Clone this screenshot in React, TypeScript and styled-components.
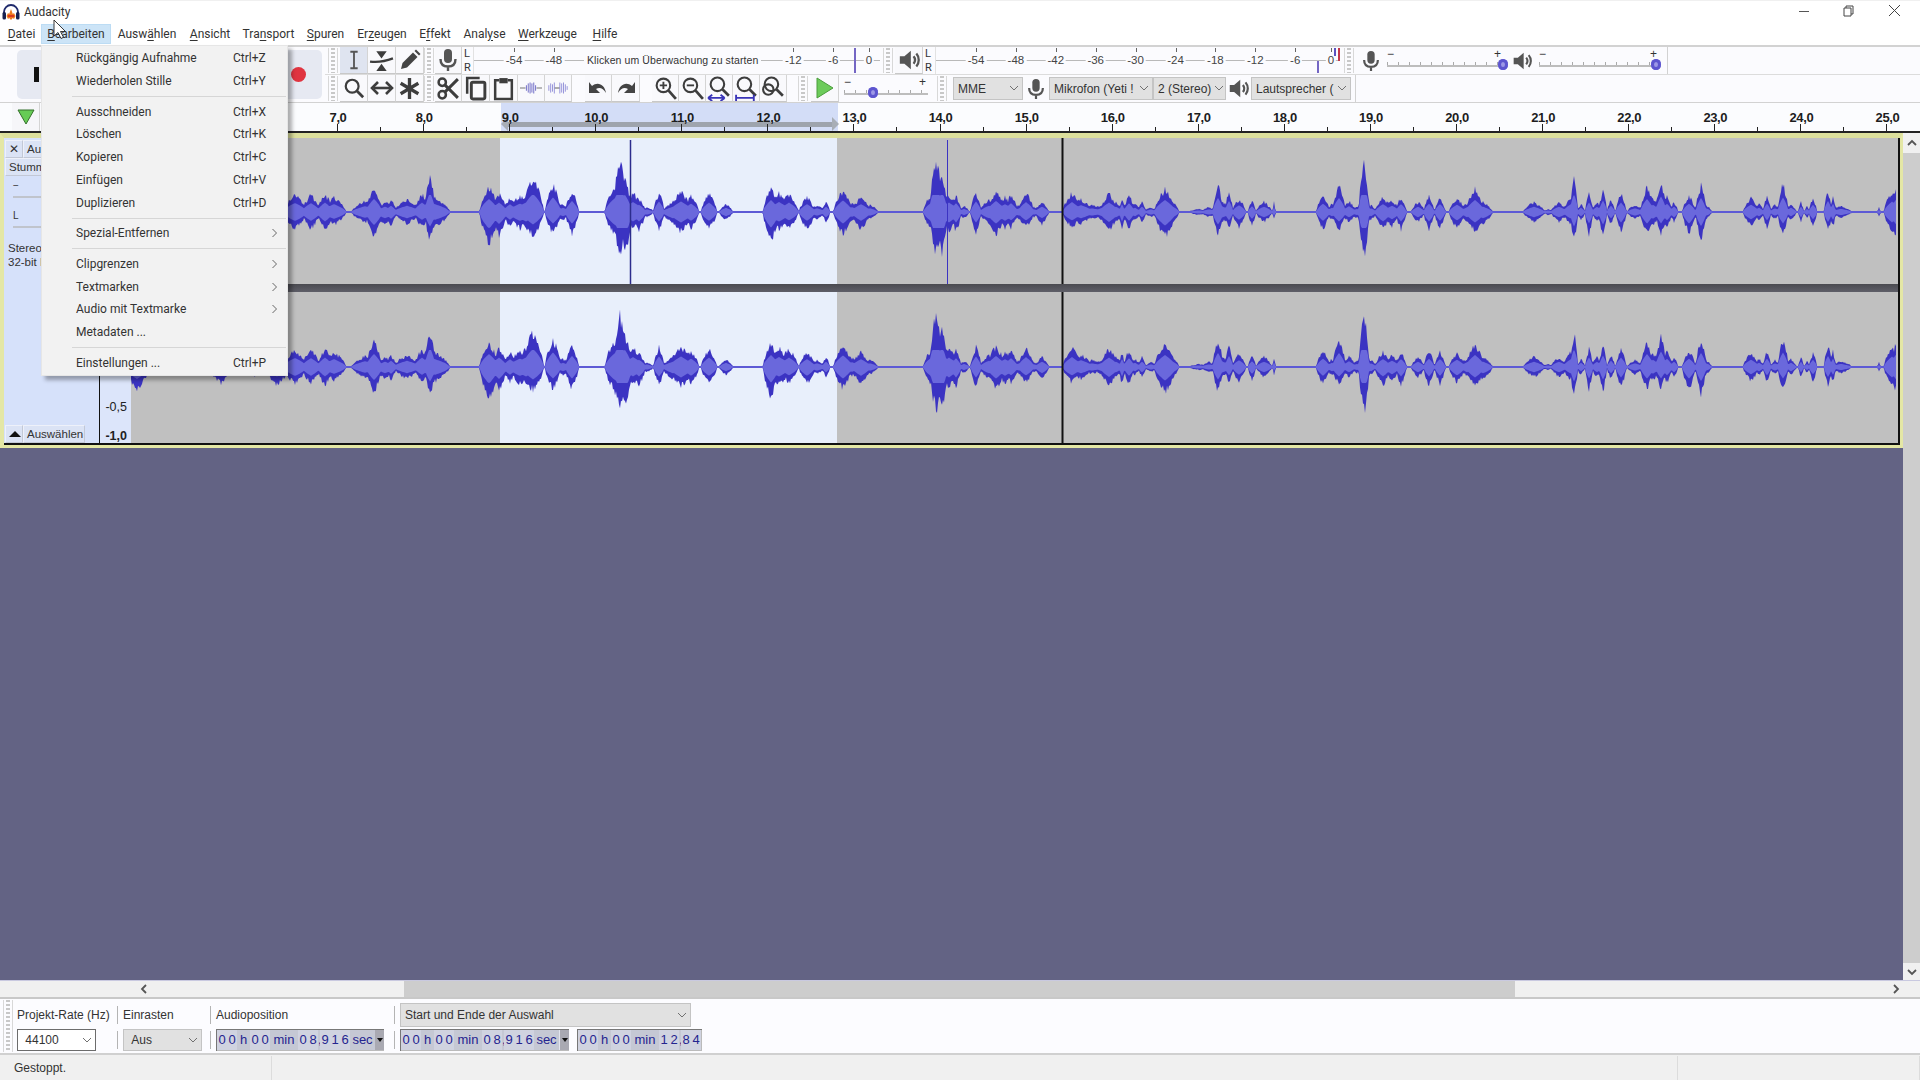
import React from 'react'
import styled, { createGlobalStyle } from 'styled-components'

const GlobalStyle = createGlobalStyle`
	html, body {
		margin: 0;
		padding: 0;
		background: #636384;
	}
	* {
		box-sizing: border-box;
	}
`

const sans = `"Liberation Sans", Arial, sans-serif`
const ui = `Roboto, "Liberation Sans", sans-serif`

/* ---------- waveform data ---------- */

// x, peak up, peak down, half width (page px)
const bursts: number[][] = [
	[138, 12, 23, 9], [160, 8, 8, 10], [222, 10, 16, 9], [255, 8, 9, 9], [278, 12, 18, 9],
	[296, 17, 17, 9], [312, 17, 17, 7], [326, 18, 18, 6], [335, 15, 13, 9],
	[366, 11, 11, 10], [375, 25, 25, 6], [386, 10, 12, 7], [392, 12, 13, 4], [408, 12, 12, 10],
	[423, 18, 15, 6], [431, 37, 28, 4], [436, 15, 15, 11],
	[490, 25, 32, 7], [500, 18, 23, 6], [511, 15, 15, 5], [521, 16, 17, 9], [534, 35, 24, 8], [527, 18, 18, 9],
	[554, 28, 22, 6], [564, 8, 8, 6], [573, 21, 22, 5],
	[618, 30, 28, 9], [621, 55, 44, 5], [626, 33, 43, 5], [634, 19, 18, 8], [640, 14, 18, 5], [648, 5, 5, 5],
	[660, 20, 18, 4], [674, 10, 12, 8], [682, 20, 20, 9], [692, 16, 17, 6], [710, 18, 17, 6], [727, 8, 8, 5],
	[772, 23, 30, 6], [780, 19, 18, 9], [790, 18, 16, 7], [808, 15, 17, 6], [818, 7, 7, 6], [827, 10, 10, 3],
	[844, 22, 22, 7], [853, 9, 9, 7], [862, 15, 17, 7], [871, 7, 7, 6],
	[931, 16, 16, 5], [937, 55, 45, 5], [943, 40, 43, 4], [950, 18, 20, 7], [957, 17, 20, 4], [965, 6, 6, 4],
	[977, 20, 20, 4], [990, 12, 12, 7], [997, 21, 22, 7], [1006, 15, 17, 7], [1012, 17, 16, 5], [1020, 7, 7, 5],
	[1027, 19, 16, 6], [1035, 5, 5, 5], [1043, 10, 12, 5],
	[1073, 19, 16, 7], [1082, 13, 12, 9], [1093, 7, 7, 10], [1103, 8, 8, 6], [1110, 18, 19, 7], [1117, 10, 10, 5],
	[1123, 15, 18, 2], [1130, 17, 17, 4], [1136, 8, 8, 4], [1143, 10, 10, 3], [1152, 5, 5, 5],
	[1166, 23, 26, 8], [1172, 12, 12, 6], [1200, 3, 3, 8], [1210, 5, 5, 6],
	[1219, 27, 24, 4], [1224, 10, 10, 6], [1230, 21, 16, 3], [1240, 13, 15, 5], [1253, 11, 13, 3], [1265, 10, 10, 6], [1275, 10, 8, 1],
	[1324, 16, 17, 5], [1333, 8, 8, 5], [1340, 27, 18, 5], [1350, 11, 10, 5], [1358, 6, 6, 5], [1365, 52, 46, 4],
	[1372, 7, 8, 4], [1384, 15, 18, 6], [1393, 12, 14, 6], [1402, 15, 18, 4], [1419, 10, 10, 5], [1430, 16, 18, 4],
	[1441, 15, 17, 4], [1458, 14, 16, 6], [1468, 9, 10, 5], [1476, 23, 20, 7], [1484, 10, 12, 7],
	[1535, 10, 10, 8], [1549, 3, 3, 4], [1560, 10, 10, 6], [1571, 14, 12, 5], [1575, 35, 28, 3], [1582, 8, 8, 3],
	[1590, 18, 22, 3], [1598, 10, 10, 4], [1604, 22, 24, 3], [1612, 12, 12, 3], [1622, 18, 20, 4], [1636, 7, 7, 6],
	[1648, 25, 22, 5], [1654, 14, 13, 5], [1662, 30, 22, 4], [1668, 16, 16, 4], [1675, 10, 10, 3], [1690, 16, 22, 5], [1702, 27, 27, 4], [1706, 8, 8, 5],
	[1752, 14, 14, 6], [1760, 8, 8, 4], [1768, 16, 16, 3], [1776, 7, 7, 4], [1784, 28, 22, 4], [1792, 8, 8, 4],
	[1802, 10, 10, 2], [1808, 6, 6, 2], [1814, 14, 14, 3], [1829, 21, 19, 3], [1834, 16, 15, 2], [1842, 6, 6, 8],
	[1880, 5, 5, 1], [1893, 20, 20, 6], [1899, 28, 28, 6],
]

const WAVE_LEFT = 132
const WAVE_WIDTH = 1765

function buildWave(seed: number, center: number) {
	let state = seed
	const rand = () => {
		state = (state * 16807) % 2147483647
		return state / 2147483647
	}
	const ups: number[] = []
	const downs: number[] = []
	const coreUps: number[] = []
	const coreDowns: number[] = []
	for (let px = 0; px <= WAVE_WIDTH; px += 1) {
		const x = WAVE_LEFT + px
		let up = 0
		let down = 0
		for (const [bx, bu, bd, bw] of bursts) {
			const d = Math.abs(x - bx)
			const reach = bw * 1.35
			if (d >= reach) continue
			const shape = Math.pow(1 - d / reach, 0.62)
			up = Math.max(up, bu * shape)
			down = Math.max(down, bd * shape)
		}
		ups.push(Math.max(up * (0.78 + 0.36 * rand()), 1))
		downs.push(Math.max(down * (0.78 + 0.36 * rand()), 1))
		coreUps.push(Math.max(Math.min(up * 0.52, 17), 0.8))
		coreDowns.push(Math.max(Math.min(down * 0.52, 16), 0.8))
	}
	const outline = (top: number[], bottom: number[]) => {
		const upper = top.map((v, i) => `${i},${(center - v).toFixed(1)}`)
		const lower = bottom.map((v, i) => `${i},${(center + v).toFixed(1)}`).reverse()
		return `M${upper.join('L')}L${lower.join('L')}Z`
	}
	return { peak: outline(ups, downs), core: outline(coreUps, coreDowns) }
}

const waveTop = buildWave(4711, 74)
const waveBottom = buildWave(90210, 75)

/* ---------- icons ---------- */

const ink = '#3d3d3d'

const Glyph = ({ size = 22, children }: { size?: number; children: React.ReactNode }) => (
	<svg width={size} height={size} viewBox="0 0 24 24" fill="none" stroke={ink} strokeWidth="2.4">
		{children}
	</svg>
)

const IBeamIcon = () => (
	<Glyph>
		<path d="M8 3h8M12 3v18M8 21h8" stroke="#555" strokeWidth="2" />
	</Glyph>
)
const EnvelopeIcon = () => (
	<Glyph size={25}>
		<path d="M7 3h10l-5 7zM7 22h10l-5-7z" fill={ink} stroke="none" />
		<path d="M1 13c7 1 14 0 22-3" strokeWidth="2.2" />
	</Glyph>
)
const PencilIcon = () => (
	<Glyph size={24}>
		<path d="M3 21l1.5-6L15 4.500 19.500 9 9 19.500z" fill="#444" stroke="none" />
		<path d="M16.500 3L18 1.500 22.500 6 21 7.500z" fill="#444" stroke="none" />
	</Glyph>
)
const MicIcon = ({ size = 24 }: { size?: number }) => (
	<Glyph size={size}>
		<rect x="8" y="1" width="8" height="14" rx="4" fill="#555" stroke="none" />
		<path d="M4.500 11c0 5 3 7.500 7.500 7.500s7.500-2.500 7.500-7.500M12 18.500V23" stroke="#555" />
	</Glyph>
)
const SearchIcon = () => (
	<Glyph>
		<circle cx="10" cy="10" r="7" />
		<path d="M15 15l7 7" strokeWidth="3" />
	</Glyph>
)
const FitIcon = () => (
	<Glyph size={24}>
		<path d="M4 12h16" strokeWidth="2.6" />
		<path d="M8 6l-6 6 6 6M16 6l6 6-6 6" strokeWidth="2.6" />
	</Glyph>
)
const MultiIcon = () => (
	<Glyph size={25}>
		<path d="M12 2v20M3.500 7l17 10M20.500 7l-17 10" strokeWidth="3.2" />
	</Glyph>
)
const CutIcon = () => (
	<Glyph size={25}>
		<circle cx="6" cy="6" r="3.500" />
		<circle cx="6" cy="18" r="3.500" />
		<path d="M8.500 8.500L21 21M8.500 15.500L21 3" strokeWidth="2.800" />
	</Glyph>
)
const CopyIcon = () => (
	<Glyph size={25}>
		<path d="M4 17V2h12" strokeWidth="2.400" />
		<rect x="8" y="6" width="13" height="16" rx="1.500" strokeWidth="2.800" />
	</Glyph>
)
const PasteIcon = () => (
	<Glyph size={25}>
		<path d="M8 4H4v18h16V4h-4" strokeWidth="2.400" />
		<rect x="8" y="2" width="8" height="5" fill={ink} stroke="none" />
	</Glyph>
)
const TrimIcon = () => (
	<Glyph>
		<path d="M0 12h6M18 12h6" stroke="#777" strokeWidth="1.300" />
		<path d="M7 9v6M9 7v10M11 6v12M13 7v10M15 6v12M17 9v6" stroke="#6a67c4" strokeWidth="1" />
	</Glyph>
)
const SilenceIcon = () => (
	<Glyph>
		<path d="M8 12h6" stroke="#777" strokeWidth="1.300" />
		<path d="M2 9v6M4 7v10M6 8v8M8 6v12M14 6v12M16 7v10M18 6v12M20 8v8M22 10v4" stroke="#8f8cd8" strokeWidth="1" />
	</Glyph>
)
const UndoIcon = () => (
	<Glyph size={24}>
		<path d="M3 6v11h11l-4-4c3.500-2 7-1 10 4 -1-8-8-12-14-7z" fill="#444" stroke="none" />
	</Glyph>
)
const RedoIcon = () => (
	<Glyph size={24}>
		<path d="M21 6v11H10l4-4c-3.500-2-7-1-10 4 1-8 8-12 14-7z" fill="#444" stroke="none" />
	</Glyph>
)
const ZoomIcon = ({ mark }: { mark: 'in' | 'out' | 'sel' | 'fit' | 'toggle' }) => (
	<Glyph size={25}>
		<circle cx="10" cy={mark === 'in' || mark === 'out' ? 9 : 8} r="6.500" strokeWidth="2" />
		<path d={mark === 'in' || mark === 'out' ? 'M15 14l7 8' : 'M15 13l6 6'} strokeWidth="2.600" />
		{mark === 'in' && <path d="M6.500 9h7M10 5.500v7" strokeWidth="1.800" />}
		{mark === 'out' && <path d="M6.500 9h7" strokeWidth="1.800" />}
		{mark === 'sel' && <path d="M1 21h16M1 21l4-3M1 21l4 3M17 21l-4-3M17 21l-4 3" stroke="#3a35b8" strokeWidth="1.800" />}
		{mark === 'fit' && <path d="M2 18v6M19 18v6M2 21h17" stroke="#3a35b8" strokeWidth="1.800" />}
		{mark === 'toggle' && <circle cx="7" cy="13" r="5" strokeWidth="2" />}
	</Glyph>
)
const PlayIcon = () => (
	<svg width="18" height="22" viewBox="0 0 18 22">
		<path d="M1 1l16 10L1 21z" fill="#6ccb5a" stroke="#4a9d3c" />
	</svg>
)
const SpeakerIcon = ({ size = 22, fill = '#555' }: { size?: number; fill?: string }) => (
	<svg width={size} height={size} viewBox="0 0 24 24" fill="none" stroke={fill} strokeWidth="2.500">
		<path d="M2 8h5l7-6v20l-7-6H2z" fill={fill} stroke="none" />
		<path d="M17 8c2 2.500 2 5.500 0 8M20 5c3.500 4 3.500 10 0 14" />
	</svg>
)
const Chevron = () => (
	<svg width="10" height="7" viewBox="0 0 10 7" fill="none" stroke="#707070" strokeWidth="1">
		<path d="M1 1l4 4 4-4" />
	</svg>
)
const Logo = () => (
	<svg width="18" height="17" viewBox="0 0 18 17" fill="none">
		<path d="M2 11V8a7 7 0 0 1 14 0v3" stroke="#1f2a6b" strokeWidth="1.800" />
		<rect x="0.500" y="8" width="3.500" height="7.500" rx="1.500" fill="#16204f" />
		<rect x="14" y="8" width="3.500" height="7.500" rx="1.500" fill="#16204f" />
		<path d="M4.500 12l1.500-3 1.200 1 1.800-5 1.800 5 1.200-1 1.500 3-1.500 3-1.200-1-1.800 2-1.800-2-1.200 1z" fill="#ef7a1d" />
		<path d="M6 12h6" stroke="#d83a24" strokeWidth="2" />
	</svg>
)

/* ---------- window shell ---------- */

const Window = styled.div`
	position: relative;
	width: 1920px;
	height: 1080px;
	display: flex;
	flex-direction: column;
	overflow: hidden;
	background: #fff;
	font-family: ${sans};
	color: #222;
`

const TitleBar = styled.div`
	height: 22px;
	display: flex;
	align-items: center;
	padding: 1px 0 0 2px;
	gap: 4px;
	background: #fff;
	border-top: 1px solid #f0f0f0;
`

const TitleText = styled.span`
	font: 12px ${ui};
	color: #333;
`

const WindowControls = styled.div`
	margin: 0 0 3px auto;
	display: flex;
	gap: 33px;
	padding-right: 19px;
	align-items: center;
`

const MenuBar = styled.div`
	height: 23px;
	display: flex;
	align-items: center;
	padding-left: 2px;
	background: #fff;
`

const MenuTitle = styled.div<{ $open?: boolean; $w: number }>`
	width: ${p => p.$w}px;
	height: 20px;
	text-align: center;
	font: 12px/20px ${ui};
	color: #333;
	background: ${p => (p.$open ? '#cce4f7' : 'transparent')};
	box-shadow: ${p => (p.$open ? 'inset 0 0 0 1px #bcdcf4' : 'none')};

	u {
		text-underline-offset: 2px;
	}
`

/* ---------- toolbars ---------- */

const Toolbars = styled.div`
	height: 58px;
	display: flex;
	background: #fbfbfe;
	border-top: 2px solid #d2d2d2;
	border-bottom: 1px solid #d2d2d2;
`

const TransportDock = styled.div`
	width: 325px;
	display: flex;
	align-items: center;
	padding-left: 3px;
`

const TransportPanel = styled.div`
	width: 305px;
	height: 49px;
	margin-left: 4px;
	display: flex;
	align-items: center;
	justify-content: space-between;
	padding: 0 16px 0 17px;
	background: #e6e9f2;
	border-radius: 5px;
`

const PauseBar = styled.div`
	width: 5px;
	height: 15px;
	background: #111;
`

const RecordDot = styled.div`
	width: 15px;
	height: 15px;
	border-radius: 50%;
	background: #e03440;
`

const ToolColumn = styled.div`
	flex: 1;
	display: flex;
	flex-direction: column;
`

const ToolRow = styled.div<{ $divider?: boolean }>`
	height: 28px;
	display: flex;
	align-items: stretch;
	border-bottom: ${p => (p.$divider ? '1px solid #dcdcdc' : 'none')};
`

const Grip = styled.div<{ $before?: number; $after?: number }>`
	width: 10px;
	flex: none;
	margin: 1px ${p => p.$after ?? 0}px 1px ${p => p.$before ?? 0}px;
	border-left: 1px solid #d8d8d8;
	border-right: 1px solid #d8d8d8;
	background: repeating-linear-gradient(180deg, #c8c8c8 0 2px, transparent 2px 4px) center / 4px 100% no-repeat;
`

const DockEnd = styled.div<{ $left: number }>`
	width: 1px;
	flex: none;
	margin-left: ${p => p.$left}px;
	background: #d2d2d2;
`

const ToolButton = styled.div<{ $active?: boolean; $w?: number }>`
	width: ${p => p.$w ?? 28}px;
	flex: none;
	display: flex;
	align-items: center;
	justify-content: center;
	background: ${p => (p.$active ? '#dfe4f0' : '#f9f9fc')};
	border-right: 1px solid #d4d4d4;
	border-bottom: 1px solid #c8c8c8;
`

const Gap = styled.div<{ $w: number }>`
	width: ${p => p.$w}px;
	flex: none;
`

const ChannelTag = styled.div<{ $w: number }>`
	width: ${p => p.$w}px;
	flex: none;
	display: flex;
	flex-direction: column;
	justify-content: center;
	padding-left: 2px;
	font: 11px/14px ${ui};
	color: #333;
`

const Meter = styled.div<{ $w: number }>`
	position: relative;
	width: ${p => p.$w}px;
	flex: none;
	background: linear-gradient(#b9b9b9, #b9b9b9) center 13px / 100% 1px no-repeat;
	border-left: 1px solid #e2e2e2;
`

const MeterLabel = styled.span`
	position: absolute;
	top: 6px;
	transform: translateX(-50%);
	padding: 0 2px;
	background: #fbfbfe;
	font: 11.500px/14px ${sans};
	color: #444;
	white-space: nowrap;
`

const MeterTick = styled.i`
	position: absolute;
	top: 1px;
	width: 1px;
	height: 4px;
	background: #666;
`

const MeterPrompt = styled.span`
	position: absolute;
	top: 6px;
	padding: 0 3px;
	background: #fbfbfe;
	font: 10.500px/14px ${sans};
	letter-spacing: 0.1px;
	color: #333;
	white-space: nowrap;
`

const MeterLevel = styled.i<{ $top: number; $h: number; $color: string }>`
	position: absolute;
	top: ${p => p.$top}px;
	width: 2px;
	height: ${p => p.$h}px;
	background: ${p => p.$color};
`

const IconSlot = styled.div<{ $w: number }>`
	width: ${p => p.$w}px;
	flex: none;
	display: flex;
	align-items: center;
	justify-content: center;
`

const SliderBox = styled.div<{ $w: number }>`
	position: relative;
	width: ${p => p.$w}px;
	flex: none;
`

const SliderSign = styled.span<{ $right?: boolean }>`
	position: absolute;
	top: 0;
	${p => (p.$right ? 'right: 6px;' : 'left: 0;')}
	font: 12px/14px ${sans};
	color: #333;
`

const SliderRail = styled.div`
	position: absolute;
	left: 0;
	right: 4px;
	bottom: 7px;
	height: 5px;
	border-bottom: 2px solid #bdbdbd;
	background: repeating-linear-gradient(90deg, #aaa 0 1px, transparent 1px 11px);
`

const SliderKnob = styled.i`
	position: absolute;
	bottom: 4px;
	width: 10px;
	height: 11px;
	border-radius: 50%;
	background: #5d55cf;
	box-shadow: inset 0 0 0 3px #5d55cf, inset 0 0 0 5px #9d98e6;
`

const Dropdown = styled.div<{ $w: number; $h?: number; $white?: boolean }>`
	width: ${p => p.$w}px;
	height: ${p => p.$h ?? 23}px;
	flex: none;
	display: flex;
	align-items: center;
	justify-content: space-between;
	gap: 3px;
	padding: 0 3px 0 4px;
	background: ${p => (p.$white ? '#fff' : '#e1e1e1')};
	border: 1px solid ${p => (p.$white ? '#6c6c6c' : '#c4c4c4')};
	font: 12px ${sans};
	color: #333;
	white-space: nowrap;
	overflow: hidden;

	svg {
		flex: none;
	}
`

const DeviceRow = styled.div`
	display: flex;
	align-items: center;
`

/* ---------- ruler ---------- */

const RulerRow = styled.div`
	position: relative;
	height: 30px;
	display: flex;
	background: #fbfcfe;
	border-bottom: 2px solid #222;
`

const PinButton = styled.div`
	width: 28px;
	height: 28px;
	margin-left: 12px;
	display: flex;
	align-items: center;
	justify-content: center;
	background: #f6f6f9;
	border-right: 1px solid #d4d4d4;
`

const RulerSelection = styled.div`
	position: absolute;
	left: 501px;
	width: 337px;
	top: 0;
	bottom: 0;
	background: #d3ddf7;
`

const LoopBar = styled.div`
	position: absolute;
	left: 507px;
	width: 325px;
	bottom: 4px;
	height: 5px;
	background: #9ea4ad;
`

const LoopHandle = styled.div<{ $left: number; $flip?: boolean }>`
	position: absolute;
	left: ${p => p.$left}px;
	bottom: 0;
	width: 0;
	height: 0;
	border-top: 7px solid transparent;
	border-bottom: 7px solid transparent;
	${p => (p.$flip ? 'border-left: 7px solid #a8aeb6;' : 'border-right: 7px solid #a8aeb6;')}
`

const RulerLabel = styled.span`
	position: absolute;
	top: 7px;
	transform: translateX(-50%);
	font: bold 13px/16px ${sans};
	letter-spacing: -0.4px;
	color: #1d1d1d;
`

const RulerTick = styled.i<{ $major?: boolean }>`
	position: absolute;
	bottom: 0;
	width: 1px;
	height: ${p => (p.$major ? 7 : 4)}px;
	background: #222;
`

/* ---------- track area ---------- */

const Main = styled.div`
	flex: 1;
	display: flex;
	min-height: 0;
`

const Workspace = styled.div`
	flex: 1;
	background: #636384;
`

const TrackFrame = styled.div`
	height: 315px;
	display: flex;
	border-style: solid;
	border-color: #e4e7a5;
	border-width: 5px 3px 3px 4px;
	border-top-color: #dcdf9c;
`

const TrackControls = styled.div`
	width: 96px;
	flex: none;
	display: flex;
	flex-direction: column;
	padding: 2px 0 0 1px;
	background: #d6e1fa;
	border-right: 1px solid #111;
	border-bottom: 2px solid #111;
`

const PanelRow = styled.div`
	display: flex;
	height: 18px;
	flex: none;
`

const PanelButton = styled.div<{ $w: number }>`
	width: ${p => p.$w}px;
	display: flex;
	align-items: center;
	justify-content: flex-start;
	padding-left: 3px;
	background: #dbe3f5;
	border: 1px solid #c2c8d6;
	border-top-color: #eef1fa;
	border-left-color: #eef1fa;
	font: 11.500px/16px ${sans};
	color: #333;
	white-space: nowrap;
	overflow: hidden;
`

const MiniSlider = styled.div<{ $top: number }>`
	position: relative;
	margin: ${p => p.$top}px 0 0 8px;
	height: 18px;
	font: 10px/12px ${sans};
	color: #333;
	border-bottom: 2px solid #c0c4cc;
`

const FormatText = styled.div`
	margin: 13px 0 0 3px;
	font: 11.500px/14px ${sans};
	color: #333;
	white-space: nowrap;
`

const SelectRow = styled(PanelRow)`
	margin-top: auto;
`

const TriangleUp = styled.i`
	width: 0;
	height: 0;
	border-left: 6px solid transparent;
	border-right: 6px solid transparent;
	border-bottom: 6px solid #111;
`

const VerticalScale = styled.div`
	width: 31px;
	flex: none;
	display: flex;
	flex-direction: column;
	justify-content: flex-end;
	align-items: flex-end;
	gap: 15px;
	padding-right: 4px;
	background: #dce5fa;
	border-bottom: 2px solid #111;
	font: 12.500px/14px ${sans};
	color: #222;
`

const ScaleBold = styled.b`
	font-size: 12.500px;
`

const WaveColumn = styled.div`
	flex: 1;
	display: flex;
	flex-direction: column;
	border-right: 2px solid #111;
	border-bottom: 2px solid #111;
`

const Channel = styled.div<{ $h: number }>`
	position: relative;
	height: ${p => p.$h}px;
	flex: none;
	background: #c0c0c0;
`

const ChannelSelection = styled.div`
	position: absolute;
	top: 0;
	bottom: 0;
	left: 369px;
	width: 337px;
	background: #e8effb;
`

const WaveSvg = styled.svg`
	position: absolute;
	inset: 0;
	display: block;
`

const ChannelDivider = styled.div`
	height: 8px;
	flex: none;
	background: linear-gradient(#4a4a50, #5e5e68);
`

/* ---------- scroll bars ---------- */

const VScroll = styled.div`
	width: 17px;
	flex: none;
	display: flex;
	flex-direction: column;
	align-items: center;
	justify-content: space-between;
	padding: 5px 0 3px;
	background: #f0f0f0;
`

const VThumb = styled.div`
	flex: 1;
	width: 100%;
	margin: 5px 0 4px;
	background: #cdcdcd;
`

const HScroll = styled.div`
	height: 17px;
	flex: none;
	display: flex;
	align-items: center;
	background: #f0f0f0;
	border-top: 1px solid #c9c9e0;
`

const ScrollGlyph = styled.span`
	width: 17px;
	display: flex;
	justify-content: center;
	flex: none;
`

const HThumb = styled.div`
	width: 1111px;
	height: 100%;
	flex: none;
	background: #cdcdcd;
`

/* ---------- selection bar and status ---------- */

const SelectionBar = styled.div`
	height: 58px;
	flex: none;
	display: flex;
	padding-left: 3px;
	background: #fcfcff;
	border-top: 2px solid #c8c8c8;
	border-bottom: 2px solid #d0d0d0;
`

const Field = styled.div<{ $w: number }>`
	width: ${p => p.$w}px;
	flex: none;
	display: flex;
	flex-direction: column;
	gap: 1px;
	padding-top: 4px;
`

const FieldRow = styled.div<{ $first?: boolean }>`
	height: 24px;
	display: flex;
	align-items: center;
	gap: 8px;
	padding-left: ${p => (p.$first ? 4 : 6)}px;
	background: ${p =>
		p.$first ? 'none' : 'linear-gradient(#b4b4b4, #b4b4b4) left center / 1px 18px no-repeat'};
	font: 12px ${sans};
	color: #333;
	white-space: nowrap;
`

const Numeric = styled.div<{ $w: number }>`
	width: ${p => p.$w}px;
	height: 22px;
	flex: none;
	display: flex;
	align-items: center;
	padding-left: 1px;
	background: #e2e4ee;
	box-shadow: inset 1px 1px 0 #777, inset -1px -1px 0 #bbb;
	font: 13px/20px ${sans};
	color: #24248f;
	overflow: hidden;
`

const Digit = styled.span`
	width: 10px;
	flex: none;
	text-align: center;
	background: #d0d3e0;
`

const Unit = styled.span<{ $w: number }>`
	width: ${p => p.$w}px;
	flex: none;
	text-align: center;
	background: #c5c8d4;
`

const NumericMenu = styled.i`
	margin-left: auto;
	width: 9px;
	height: 20px;
	flex: none;
	display: flex;
	align-items: center;
	justify-content: center;
	background: #a9a9b2;

	&::after {
		content: '';
		border-left: 3.500px solid transparent;
		border-right: 3.500px solid transparent;
		border-top: 4px solid #111;
	}
`

const StatusBar = styled.div`
	height: 25px;
	flex: none;
	display: flex;
	padding-top: 1px;
	background: #f0f0f0;
	font: 12px ${sans};
	color: #333;
`

const StatusCell = styled.div<{ $w?: number }>`
	width: ${p => (p.$w ? `${p.$w}px` : 'auto')};
	flex: ${p => (p.$w ? 'none' : '1')};
	display: flex;
	align-items: center;
	padding-left: 14px;
	border-right: 1px solid #dcdcdc;
`

/* ---------- edit menu ---------- */

const EditMenu = styled.div`
	position: absolute;
	left: 41px;
	top: 45px;
	width: 247px;
	height: 331px;
	padding: 1px 0 0;
	background: #f2f2f2;
	border: 1px solid #e6e6e6;
	box-shadow: 4px 4px 4px rgba(0, 0, 0, 0.32);
	font: 12px ${ui};
	color: #333;
`

const MenuItem = styled.div`
	height: 22.750px;
	display: flex;
	align-items: center;
	padding-left: 34px;
`

const Shortcut = styled.span`
	position: absolute;
	left: 191px;
`

const SubArrow = styled.span`
	position: absolute;
	left: 229px;
	display: flex;
`

const MenuSeparator = styled.div`
	height: 1px;
	margin: 3.500px 1px 3.300px 30px;
	background: #d6d6d6;
`

const Pointer = styled.svg`
	position: absolute;
	left: 53px;
	top: 19px;
`

/* ---------- small pieces ---------- */

const menuTitles: [string, string, string, number][] = [
	['', 'D', 'atei', 39],
	['', 'B', 'earbeiten', 70],
	['Ausw', 'ä', 'hlen', 72],
	['', 'A', 'nsicht', 54],
	['Tra', 'n', 'sport', 63],
	['', 'S', 'puren', 51],
	['Er', 'z', 'eugen', 62],
	['E', 'f', 'fekt', 44],
	['Anal', 'y', 'se', 55],
	['', 'W', 'erkzeuge', 71],
	['', 'H', 'ilfe', 44],
]

const menuGroups: { label: string; keys?: string; sub?: boolean }[][] = [
	[
		{ label: 'Rückgängig Aufnahme', keys: 'Ctrl+Z' },
		{ label: 'Wiederholen Stille', keys: 'Ctrl+Y' },
	],
	[
		{ label: 'Ausschneiden', keys: 'Ctrl+X' },
		{ label: 'Löschen', keys: 'Ctrl+K' },
		{ label: 'Kopieren', keys: 'Ctrl+C' },
		{ label: 'Einfügen', keys: 'Ctrl+V' },
		{ label: 'Duplizieren', keys: 'Ctrl+D' },
	],
	[{ label: 'Spezial-Entfernen', sub: true }],
	[
		{ label: 'Clipgrenzen', sub: true },
		{ label: 'Textmarken', sub: true },
		{ label: 'Audio mit Textmarke', sub: true },
		{ label: 'Metadaten ...' },
	],
	[{ label: 'Einstellungen ...', keys: 'Ctrl+P' }],
]

const dbLabels = ['-54', '-48', '-42', '-36', '-30', '-24', '-18', '-12', '-6', '0']
const inputLabels = ['-54', '-48', '-12', '-6', '0']

function dbOffset(label: string, minus54: number) {
	if (label === '0') return minus54 + 355
	return minus54 + ((54 + Number(label)) / 6) * 39.9
}

const rulerMarks = Array.from({ length: 19 }, (_, i) => ({
	value: 7 + i,
	x: 337 + i * 86.08,
}))

const unitWidths: Record<string, number> = { h: 13, min: 28, ',': 2, sec: 25 }

const SmallArrow = ({ d }: { d: string }) => (
	<svg width="10" height="10" viewBox="0 0 10 10" fill="none" stroke="#555" strokeWidth="1.800">
		<path d={d} />
	</svg>
)

function Slider({ width, knob }: { width: number; knob: number }) {
	return (
		<SliderBox $w={width}>
			<SliderSign>−</SliderSign>
			<SliderSign $right>+</SliderSign>
			<SliderRail />
			<SliderKnob style={{ left: knob }} />
		</SliderBox>
	)
}

function TimeReadout({ width, parts, menu }: { width: number; parts: string; menu?: boolean }) {
	return (
		<Numeric $w={width}>
			{parts.split(' ').map((part, i) =>
				unitWidths[part] ? (
					<Unit key={i} $w={unitWidths[part]}>{part}</Unit>
				) : (
					<Digit key={i}>{part}</Digit>
				),
			)}
			{menu && <NumericMenu />}
		</Numeric>
	)
}

function Wave({ data, width, height }: { data: { peak: string; core: string }; width: number; height: number }) {
	return (
		<WaveSvg width={width} height={height} viewBox={`0 0 ${width} ${height}`}>
			<path d={data.peak} fill="#3b33c2" />
			<path d={data.core} fill="#6a68dc" />
		</WaveSvg>
	)
}

export default function App() {
	return (
		<Window>
			<GlobalStyle />
			<TitleBar>
				<Logo />
				<TitleText>Audacity</TitleText>
				<WindowControls>
					<svg width="12" height="12" viewBox="0 0 12 12" stroke="#555"><path d="M1 6.500h10" /></svg>
					<svg width="12" height="12" viewBox="0 0 12 12" fill="none" stroke="#444"><path d="M3 3V1h7v8H8M1 3h7v8H1z" /></svg>
					<svg width="13" height="13" viewBox="0 0 13 13" stroke="#444"><path d="M1 1l11 11M12 1L1 12" /></svg>
				</WindowControls>
			</TitleBar>

			<MenuBar>
				{menuTitles.map(([pre, key, post, w]) => (
					<MenuTitle key={pre + key + post} $w={w} $open={key === 'B'}>
						{pre}<u>{key}</u>{post}
					</MenuTitle>
				))}
			</MenuBar>

			<Toolbars>
				<TransportDock>
					<Grip />
					<TransportPanel>
						<PauseBar />
						<RecordDot />
					</TransportPanel>
				</TransportDock>
				<ToolColumn>
					<ToolRow $divider>
						<Grip $before={3} $after={2} />
						<ToolButton $active><IBeamIcon /></ToolButton>
						<ToolButton><EnvelopeIcon /></ToolButton>
						<ToolButton><PencilIcon /></ToolButton>
						<Grip $after={1} />
						<ToolButton $w={27}><MicIcon /></ToolButton>
						<ChannelTag $w={11}><span>L</span><span>R</span></ChannelTag>
						<Meter $w={407}>
							{inputLabels.map(l => (
								<React.Fragment key={l}>
									<MeterTick style={{ left: dbOffset(l, 40) }} />
									<MeterLabel style={{ left: dbOffset(l, 40) }}>{l}</MeterLabel>
								</React.Fragment>
							))}
							<MeterPrompt style={{ left: 110 }}>Klicken um Überwachung zu starten</MeterPrompt>
							<MeterLevel style={{ left: 380 }} $top={1} $h={25} $color="#7466c4" />
						</Meter>
						<Grip $before={3} $after={2} />
						<ToolButton><SpeakerIcon /></ToolButton>
						<ChannelTag $w={12}><span>L</span><span>R</span></ChannelTag>
						<Meter $w={404}>
							{dbLabels.map(l => (
								<React.Fragment key={l}>
									<MeterTick style={{ left: dbOffset(l, 40) }} />
									<MeterLabel style={{ left: dbOffset(l, 40) }}>{l}</MeterLabel>
								</React.Fragment>
							))}
							<MeterLevel style={{ left: 381 }} $top={14} $h={12} $color="#7466c4" />
							<MeterLevel style={{ left: 398 }} $top={1} $h={8} $color="#5a52c0" />
							<MeterLevel style={{ left: 402 }} $top={1} $h={13} $color="#c2374a" />
						</Meter>
						<Grip $before={5} $after={6} />
						<IconSlot $w={22}><MicIcon /></IconSlot>
						<Gap $w={5} />
						<Slider width={120} knob={111} />
						<Gap $w={5} />
						<IconSlot $w={20}><SpeakerIcon size={20} /></IconSlot>
						<Gap $w={7} />
						<Slider width={124} knob={112} />
						<DockEnd $left={4} />
					</ToolRow>
					<ToolRow>
						<Grip $before={3} $after={2} />
						<ToolButton><SearchIcon /></ToolButton>
						<ToolButton><FitIcon /></ToolButton>
						<ToolButton><MultiIcon /></ToolButton>
						<Grip $after={1} />
						<ToolButton $w={27}><CutIcon /></ToolButton>
						<ToolButton><CopyIcon /></ToolButton>
						<ToolButton><PasteIcon /></ToolButton>
						<ToolButton $w={27}><TrimIcon /></ToolButton>
						<ToolButton $w={27}><SilenceIcon /></ToolButton>
						<Gap $w={13} />
						<ToolButton $w={27}><UndoIcon /></ToolButton>
						<ToolButton><RedoIcon /></ToolButton>
						<Gap $w={12} />
						<ToolButton $w={27}><ZoomIcon mark="in" /></ToolButton>
						<ToolButton $w={27}><ZoomIcon mark="out" /></ToolButton>
						<ToolButton $w={27}><ZoomIcon mark="sel" /></ToolButton>
						<ToolButton $w={27}><ZoomIcon mark="fit" /></ToolButton>
						<ToolButton $w={27}><ZoomIcon mark="toggle" /></ToolButton>
						<Grip $before={11} $after={3} />
						<ToolButton><PlayIcon /></ToolButton>
						<Gap $w={5} />
						<Slider width={88} knob={24} />
						<Grip $before={5} $after={6} />
						<DeviceRow>
							<Dropdown $w={70}>MME<Chevron /></Dropdown>
							<IconSlot $w={26}><MicIcon size={22} /></IconSlot>
							<Dropdown $w={104}>Mikrofon (Yeti !<Chevron /></Dropdown>
							<Dropdown $w={73}>2 (Stereo)<Chevron /></Dropdown>
							<IconSlot $w={25}><SpeakerIcon size={21} /></IconSlot>
							<Dropdown $w={100}>Lautsprecher (<Chevron /></Dropdown>
						</DeviceRow>
						<DockEnd $left={4} />
					</ToolRow>
				</ToolColumn>
			</Toolbars>

			<RulerRow>
				<RulerSelection />
				<PinButton>
					<svg width="18" height="16" viewBox="0 0 18 16">
						<path d="M1 1h16L9 15z" fill="#66cc55" stroke="#35702c" />
					</svg>
				</PinButton>
				<LoopBar />
				<LoopHandle $left={501} />
				<LoopHandle $left={832} $flip />
				{rulerMarks.map(m => (
					<React.Fragment key={m.value}>
						<RulerLabel style={{ left: m.x + 1 }}>{m.value},0</RulerLabel>
						<RulerTick $major style={{ left: m.x }} />
						<RulerTick style={{ left: m.x + 43 }} />
					</React.Fragment>
				))}
			</RulerRow>

			<Main>
				<Workspace>
					<TrackFrame>
						<TrackControls>
							<PanelRow>
								<PanelButton $w={18}>✕</PanelButton>
								<PanelButton $w={75}>Audio</PanelButton>
							</PanelRow>
							<PanelRow>
								<PanelButton $w={46}>Stumm</PanelButton>
							</PanelRow>
							<MiniSlider $top={4}>−</MiniSlider>
							<MiniSlider $top={12}>L</MiniSlider>
							<FormatText>Stereo, 44100Hz<br />32-bit Float</FormatText>
							<SelectRow>
								<PanelButton $w={18}><TriangleUp /></PanelButton>
								<PanelButton $w={62}>Auswählen</PanelButton>
							</SelectRow>
						</TrackControls>
						<VerticalScale>
							<span>-0,5</span>
							<ScaleBold>-1,0</ScaleBold>
						</VerticalScale>
						<WaveColumn>
							<Channel $h={146}>
								<ChannelSelection />
								<Wave data={waveTop} width={1766} height={146} />
								<WaveSvg width={1766} height={146} viewBox="0 0 1766 146">
									<path d="M499.500 2V146" stroke="#2c2c8c" strokeWidth="1.500" />
									<path d="M816.500 2V146" stroke="#3b33c2" strokeWidth="1" />
									<path d="M931.500 0V146" stroke="#111" strokeWidth="2" />
								</WaveSvg>
							</Channel>
							<ChannelDivider />
							<Channel $h={151}>
								<ChannelSelection />
								<Wave data={waveBottom} width={1766} height={151} />
								<WaveSvg width={1766} height={151} viewBox="0 0 1766 151">
									<path d="M931.500 0V151" stroke="#111" strokeWidth="2" />
								</WaveSvg>
							</Channel>
						</WaveColumn>
					</TrackFrame>
				</Workspace>
				<VScroll>
					<SmallArrow d="M1 7l4-4 4 4" />
					<VThumb />
					<SmallArrow d="M1 3l4 4 4-4" />
				</VScroll>
			</Main>

			<HScroll>
				<Gap $w={135} />
				<ScrollGlyph><SmallArrow d="M7 1L3 5l4 4" /></ScrollGlyph>
				<Gap $w={252} />
				<HThumb />
				<Gap $w={372} />
				<ScrollGlyph><SmallArrow d="M3 1l4 4-4 4" /></ScrollGlyph>
			</HScroll>

			<SelectionBar>
				<Grip />
				<Field $w={104}>
					<FieldRow $first>Projekt-Rate (Hz)</FieldRow>
					<FieldRow $first>
						<Dropdown $w={79} $h={22} $white>&nbsp;44100<Chevron /></Dropdown>
					</FieldRow>
				</Field>
				<Field $w={93}>
					<FieldRow>Einrasten</FieldRow>
					<FieldRow>
						<Dropdown $w={79} $h={22}>&nbsp;Aus<Chevron /></Dropdown>
					</FieldRow>
				</Field>
				<Field $w={184}>
					<FieldRow>Audioposition</FieldRow>
					<FieldRow>
						<TimeReadout width={168} parts="0 0 h 0 0 min 0 8 , 9 1 6 sec" menu />
					</FieldRow>
				</Field>
				<Field $w={320}>
					<FieldRow>
						<Dropdown $w={291} $h={24}>Start und Ende der Auswahl<Chevron /></Dropdown>
					</FieldRow>
					<FieldRow>
						<TimeReadout width={169} parts="0 0 h 0 0 min 0 8 , 9 1 6 sec" menu />
						<TimeReadout width={125} parts="0 0 h 0 0 min 1 2 , 8 4" />
					</FieldRow>
				</Field>
			</SelectionBar>

			<StatusBar>
				<StatusCell $w={272}>Gestoppt.</StatusCell>
				<StatusCell />
				<StatusCell $w={242} />
			</StatusBar>

			<EditMenu>
				{menuGroups.map((group, g) => (
					<React.Fragment key={g}>
						{g > 0 && <MenuSeparator />}
						{group.map(item => (
							<MenuItem key={item.label}>
								{item.label}
								{item.keys && <Shortcut>{item.keys}</Shortcut>}
								{item.sub && (
									<SubArrow>
										<svg width="7" height="10" viewBox="0 0 7 10" fill="none" stroke="#666"><path d="M1.500 1l4 4-4 4" /></svg>
									</SubArrow>
								)}
							</MenuItem>
						))}
					</React.Fragment>
				))}
			</EditMenu>

			<Pointer width="13" height="21" viewBox="0 0 13 21">
				<path d="M1 1v16l4-3.500 3 6 2.500-1.200-3-5.800h5z" fill="#fff" stroke="#222" strokeWidth="0.900" />
			</Pointer>
		</Window>
	)
}
